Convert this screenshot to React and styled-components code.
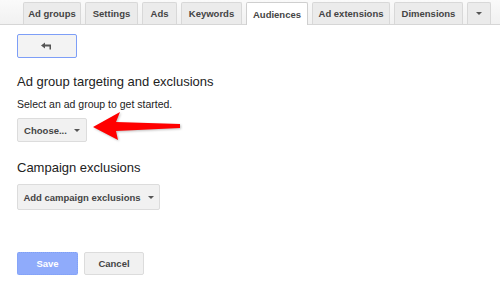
import React from 'react'
import styled, {createGlobalStyle} from 'styled-components'

const Global = createGlobalStyle`
  body {
    margin: 0;
    background: #fff;
    font-family: "Liberation Sans", Arial, sans-serif;
  }
`

const Page = styled.div`
  position: relative;
  width: 500px;
  height: 287px;
  overflow: hidden;
`

const TabBar = styled.div`
  height: 24px;
  display: flex;
  align-items: flex-end;
  gap: 4px;
  padding-left: 23px;
  border-bottom: 1px solid #d6d6d6;
  background: linear-gradient(#fafafa, #f1f1f1);
`

const Tab = styled.div`
  width: ${p => p.w}px;
  box-sizing: border-box;
  display: flex;
  align-items: center;
  justify-content: center;
  white-space: nowrap;
  font-size: 9.5px;
  font-weight: bold;
  color: #444;
  border: 1px solid ${p => (p.active ? '#cfcfcf' : '#d8d8d8')};
  border-bottom: none;
  border-radius: 2px 2px 0 0;
  background: ${p => (p.active ? '#fff' : '#ebebeb')};
  margin-bottom: ${p => (p.active ? '-1px' : '0')};
  height: ${p => (p.active ? '23px' : '22px')};
`

const Content = styled.div`
  padding: 9px 17px 0;
  color: #222;
`

const Button = styled.button`
  display: flex;
  align-items: center;
  justify-content: center;
  gap: 7px;
  box-sizing: border-box;
  width: ${p => p.w}px;
  height: ${p => p.h}px;
  padding: 0;
  white-space: nowrap;
  font-family: "Liberation Sans", Arial, sans-serif;
  font-size: 9.5px;
  font-weight: bold;
  color: #444;
  background: #f1f1f1;
  border: 1px solid #dcdcdc;
  border-radius: 2px;
`

const BackButton = styled(Button)`
  border-color: #7d9ef7;
  background: #f3f3f3;
`

const SaveButton = styled(Button)`
  background: #8fabfb;
  border: 1px dotted #7e9ff5;
  color: #fff;
`

const Heading = styled.h2`
  margin: ${p => p.top}px 0 0;
  font-size: 13px;
  font-weight: normal;
  line-height: 16px;
  color: #222;
`

const Hint = styled.p`
  margin: 8px 0 0;
  font-size: 10.5px;
  line-height: 12px;
  color: #222;
`

const Row = styled.div`
  display: flex;
  gap: 6px;
  margin-top: ${p => p.top}px;
`

const Caret = styled.span`
  width: 0;
  height: 0;
  border-left: 3px solid transparent;
  border-right: 3px solid transparent;
  border-top: 3.5px solid #555;
`

const Pointer = styled.svg`
  position: absolute;
  left: 90px;
  top: 108px;
  filter: drop-shadow(1px 1px 1px rgba(0, 0, 0, 0.25));
`

const App = () => (
  <Page>
    <Global />
    <TabBar>
      <Tab w={58}>Ad groups</Tab>
      <Tab w={53}>Settings</Tab>
      <Tab w={35}>Ads</Tab>
      <Tab w={61}>Keywords</Tab>
      <Tab w={62} active>Audiences</Tab>
      <Tab w={78}>Ad extensions</Tab>
      <Tab w={69}>Dimensions</Tab>
      <Tab w={24}><Caret /></Tab>
    </TabBar>
    <Content>
      <BackButton w={60} h={24}>
        <svg width="12" height="8" viewBox="0 0 12 8">
          <path d="M0 3.5 L4 0.5 L4 2.5 L10 2.5 L10 7.5 L8.5 7.5 L8.5 4.5 L4 4.5 L4 6.5 Z" fill="#555" />
        </svg>
      </BackButton>
      <Heading top={16}>Ad group targeting and exclusions</Heading>
      <Hint>Select an ad group to get started.</Hint>
      <Row top={8}>
        <Button w={70} h={24}>Choose... <Caret /></Button>
      </Row>
      <Heading top={18}>Campaign exclusions</Heading>
      <Row top={8}>
        <Button w={143} h={26}>Add campaign exclusions <Caret /></Button>
      </Row>
      <Row top={42}>
        <SaveButton w={61} h={23}>Save</SaveButton>
        <Button w={60} h={23}>Cancel</Button>
      </Row>
    </Content>
    <Pointer width="95" height="36" viewBox="0 0 95 36">
      <path d="M3 19 L30 4 L26 14 L90 16 L90 20 L26 23 L28 32 Z" fill="#f00" />
    </Pointer>
  </Page>
)

export default App
